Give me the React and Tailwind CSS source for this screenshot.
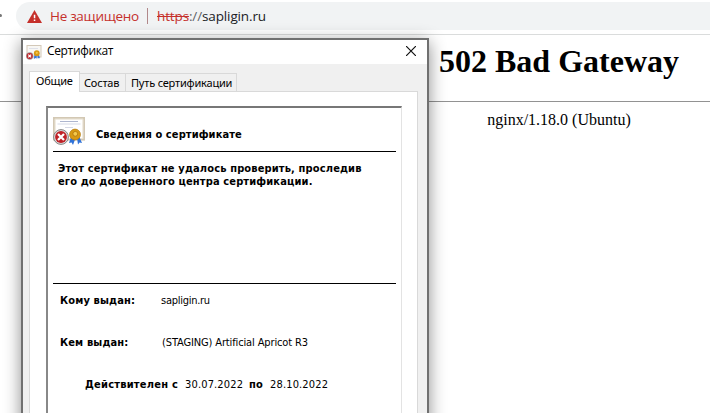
const tahoma = "font-['DejaVu_Sans_Condensed','DejaVu_Sans',sans-serif]";

function CertificateIcon({ className }) {
  return (
    <svg viewBox="0 0 32 28" className={className} aria-hidden="true">
      <rect x="0.9" y="0.9" width="30.2" height="21.8" fill="#fdfcf9" stroke="#d3c8b4" strokeWidth="1.8" />
      <rect x="2.2" y="2.2" width="27.6" height="19.2" fill="#fff" stroke="#e8e0d0" strokeWidth="0.8" />
      <path d="M7 4.5h18" stroke="#aeb6cf" strokeWidth="1" />
      <path d="M4.5 7h23M12 10.5h8" stroke="#d5d9e6" strokeWidth="1" />
      <path d="M18 20l-2 6 2.6-.6L20 28l2.2-6zM24 21l1 6.5 1.6-2 2.4.5-2.6-6z" fill="#2f72d8" />
      <circle cx="22" cy="17.5" r="5.4" fill="#d99a14" stroke="#b87c10" strokeWidth="0.8" />
      <circle cx="22.3" cy="16.8" r="2.4" fill="#f4c94d" stroke="#a96f0b" strokeWidth="0.7" />
      <circle cx="8" cy="20" r="7.4" fill="#dedede" stroke="#858585" strokeWidth="1" />
      <circle cx="8" cy="20" r="5.9" fill="#bf2026" />
      <path d="M5 17l6 6M11 17l-6 6" stroke="#fff" strokeWidth="2.3" />
    </svg>
  );
}

function SmallCertificateIcon() {
  return (
    <svg width="16" height="15" viewBox="0 0 16 15" aria-hidden="true">
      <rect x="1" y="0.5" width="14" height="11.5" fill="#f8f7f4" stroke="#d3c8b8" />
      <path d="M3 3.5h9" stroke="#dfe1e9" />
      <path d="M8.5 9L7.8 14l1.7-1 1 .8.5-4zM11 9l.8 4.8 1-.9 1.2.3L12.8 9z" fill="#3a78d4" />
      <circle cx="10.8" cy="8.2" r="2.9" fill="#d99a14" />
      <circle cx="10.8" cy="7.8" r="1.1" fill="#f4c94d" />
      <circle cx="3.7" cy="11" r="3.7" fill="#a39a9a" />
      <circle cx="3.7" cy="11" r="3" fill="#c1272d" />
      <path d="M2.3 9.6l2.8 2.8M5.1 9.6l-2.8 2.8" stroke="#fff" strokeWidth="1.2" />
    </svg>
  );
}

function AddressBar() {
  return (
    <div className="flex h-[35px] border-b border-[#dadcdc] bg-white pt-[2px] font-['Open_Sans','Noto_Sans',sans-serif]">
      <div className="flex w-4 shrink-0">
        <span className="mt-[12px] h-[3px] w-[2px] rounded-r bg-[#777]" />
      </div>
      <div className="flex h-7 flex-1 items-center rounded-l-full bg-[#f1f3f4] pl-[11px] text-[14px] leading-7">
        <svg width="15" height="13" viewBox="0 0 15 13" className="shrink-0" aria-hidden="true">
          <path d="M7.5 0L15 13H0z" fill="#c5302b" />
          <path d="M6.8 4.7h1.5v3.6H6.8zM6.8 9.6h1.5v1.5H6.8z" fill="#fff" />
        </svg>
        <span className="ml-[8px] w-[97px] text-[13.5px] whitespace-nowrap tracking-[-0.3px] text-[#c5302b]">Не защищено</span>
        <span className="h-4 w-px bg-[#b1888a]" />
        <span className="ml-[9px] text-[13.5px] whitespace-nowrap tracking-[-0.13px] text-[#202124]">
          <span className="text-[#c5302b] line-through">https</span>
          <span className="text-[#5f6368]">://</span>sapligin.ru
        </span>
      </div>
    </div>
  );
}

function GatewayPage() {
  return (
    <div className="ml-[409px] w-[300px] pt-[8px] text-center font-['Liberation_Serif',serif] text-black">
      <h1 className="h-[37px] text-[32px] leading-[37px] font-bold">502 Bad Gateway</h1>
      <p className="mt-[31px] text-[16px] leading-[18px]">nginx/1.18.0 (Ubuntu)</p>
    </div>
  );
}

function CertificateDialog() {
  return (
    <section className="absolute top-[38px] left-[21px] h-[420px] w-[408px] border-2 border-[#707070] bg-[#f0f0f0] text-black shadow-[0_4px_16px_rgba(0,0,0,0.45)]">
      <header className="flex h-6 items-center bg-white pl-[3px] font-['Open_Sans','Noto_Sans',sans-serif] text-[12px]">
        <SmallCertificateIcon />
        <span className="ml-[5px] h-6 leading-[22px] tracking-[-0.35px]">Сертификат</span>
        <svg width="10" height="10" viewBox="0 0 10 10" className="-mt-[2px] mr-[11px] ml-auto" aria-hidden="true">
          <path d="M0 0l10 10M10 0L0 10" stroke="#111" strokeWidth="1.2" />
        </svg>
      </header>
      <nav className="ml-[6px] flex h-[27px] items-end font-['Noto_Sans',sans-serif] text-[11px] tracking-[-0.2px]">
        <span className="z-10 -mb-px h-[21px] w-[51px] border border-b-0 border-[#d9d9d9] bg-white pl-[6px] leading-[18px]">Общие</span>
        <span className="h-[18px] w-[46px] border-t border-r border-[#d9d9d9] pl-[4px] leading-[18px]">Состав</span>
        <span className="h-[18px] w-[111px] border-t border-r border-[#d9d9d9] pl-[5px] leading-[18px] whitespace-nowrap">Путь сертификации</span>
      </nav>
      <div className="mr-[9px] ml-[6px] h-[340px] border border-[#d9d9d9] bg-white pt-[14px] pr-[15px] pl-[16px]">
        <div className={`h-[340px] border-t-2 border-r border-l-2 border-t-[#777] border-r-[#e3e3e3] border-l-[#888] pt-[9px] pr-[5px] pl-[5px] text-[11px] ${tahoma}`}>
          <div className="flex h-[35px] border-b border-black">
            <CertificateIcon className="h-7 w-8" />
            <h2 className="ml-[11px] pt-[11px] leading-[13px] font-bold tracking-[0.1px]">Сведения о сертификате</h2>
          </div>
          <p className="h-[131px] pt-[10px] pl-[5px] leading-[13px] font-bold tracking-[0.14px] whitespace-nowrap">
            Этот сертификат не удалось проверить, проследив<br />его до доверенного центра сертификации.
          </p>
          <div className="border-t border-black pt-[10px] leading-[13px]">
            <div className="flex h-[42px] pl-[7px]">
              <b className="w-[101px] tracking-[0.14px]">Кому выдан:</b>
              <span className="tracking-[-0.27px]">sapligin.ru</span>
            </div>
            <div className="flex h-[42px] pl-[7px]">
              <b className="w-[102px] tracking-[0.14px]">Кем выдан:</b>
              <span className="tracking-[-0.13px]">(STAGING) Artificial Apricot R3</span>
            </div>
            <div className="flex pl-[32px] tracking-[0.15px] whitespace-nowrap">
              <b className="w-[100px] tracking-[0.23px]">Действителен с</b>
              <span className="w-[64px]">30.07.2022</span>
              <b className="w-[21px]">по</b>
              <span>28.10.2022</span>
            </div>
          </div>
        </div>
      </div>
    </section>
  );
}

export default function App() {
  return (
    <main className="relative h-[413px] w-[710px] overflow-hidden bg-white">
      <AddressBar />
      <div className="h-[67px] border-b border-[#929292]">
        <GatewayPage />
      </div>
      <CertificateDialog />
    </main>
  );
}
